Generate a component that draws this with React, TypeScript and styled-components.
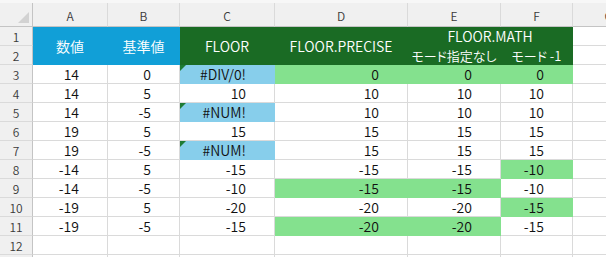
import React from "react";
import styled, { createGlobalStyle } from "styled-components";

const GlobalStyle = createGlobalStyle`
  html, body { margin: 0; padding: 0; background: #ffffff; }
  body { font-family: "Noto Sans CJK JP", "Noto Sans", sans-serif; }
`;

const BLUE = "#119fd7";
const DARK_GREEN = "#1a6b24";
const SKY = "#87ceeb";
const MINT = "#84e18e";
const GRID = "#dadada";
const HEAD_BG = "#f0f0f0";
const HEAD_LINE = "#c4c4c4";

const Sheet = styled.div`
  width: 606px;
  height: 257px;
  overflow: hidden;
  background: #fff;
`;

const TopStrip = styled.div`
  height: 3px;
  background: #f7f7f7;
`;

const Grid = styled.div`
  display: grid;
  grid-template-columns: 33px 75px 72px 95px 133px 93px 72px 72px;
  grid-template-rows: 24px repeat(13, 19px);
`;

const Corner = styled.div`
  background: ${HEAD_BG};
  border-right: 1px solid ${HEAD_LINE};
  border-bottom: 1px solid ${HEAD_LINE};
  box-sizing: border-box;
  display: flex;
  align-items: flex-end;
  justify-content: flex-end;
  padding: 0 3px 3px 0;
`;

const CornerMark = styled.div`
  width: 0;
  height: 0;
  border-left: 11px solid transparent;
  border-bottom: 11px solid #d2d2d2;
`;

const ColHead = styled.div`
  background: ${HEAD_BG};
  border-right: 1px solid ${GRID};
  border-bottom: 1px solid ${HEAD_LINE};
  box-sizing: border-box;
  display: flex;
  align-items: center;
  justify-content: center;
  padding-top: 2px;
  font-size: 12px;
  font-weight: 350;
  color: #3a3a3a;
`;

const RowHead = styled.div`
  background: ${HEAD_BG};
  border-right: 1px solid ${HEAD_LINE};
  border-bottom: 1px solid ${GRID};
  box-sizing: border-box;
  display: flex;
  align-items: center;
  justify-content: center;
  font-size: 12px;
  font-weight: 350;
  color: #3a3a3a;
`;

const TitleCell = styled.div<{ $fill: string; $col: string; $row: string; $small?: boolean }>`
  grid-column: ${(p) => p.$col};
  grid-row: ${(p) => p.$row};
  background: ${(p) => p.$fill};
  border-right: 1px solid ${(p) => p.$fill};
  border-bottom: 1px solid ${(p) => p.$fill};
  box-sizing: border-box;
  display: flex;
  align-items: center;
  justify-content: center;
  color: #ffffff;
  font-size: ${(p) => (p.$small ? "13px" : "14px")};
  font-weight: 350;
  font-feature-settings: "palt";
  white-space: nowrap;
`;

const Cell = styled.div<{ $fill?: string }>`
  position: relative;
  background: ${(p) => p.$fill ?? "#ffffff"};
  border-right: 1px solid ${(p) => p.$fill ?? GRID};
  border-bottom: 1px solid ${(p) => p.$fill ?? GRID};
  box-sizing: border-box;
  display: flex;
  align-items: center;
  justify-content: flex-end;
  padding-right: 28px;
  font-size: 14px;
  font-weight: 350;
  color: #111;
  white-space: nowrap;
`;

const ErrorMark = styled.span`
  position: absolute;
  left: 0;
  top: 0;
  width: 0;
  height: 0;
  border-top: 6px solid #1e7b34;
  border-right: 6px solid transparent;
`;

type CellData = { v: string; fill?: string; err?: boolean };

const rows: CellData[][] = [
  [{ v: "14" }, { v: "0" }, { v: "#DIV/0!", fill: SKY, err: true }, { v: "0", fill: MINT }, { v: "0", fill: MINT }, { v: "0", fill: MINT }],
  [{ v: "14" }, { v: "5" }, { v: "10" }, { v: "10" }, { v: "10" }, { v: "10" }],
  [{ v: "14" }, { v: "-5" }, { v: "#NUM!", fill: SKY, err: true }, { v: "10" }, { v: "10" }, { v: "10" }],
  [{ v: "19" }, { v: "5" }, { v: "15" }, { v: "15" }, { v: "15" }, { v: "15" }],
  [{ v: "19" }, { v: "-5" }, { v: "#NUM!", fill: SKY, err: true }, { v: "15" }, { v: "15" }, { v: "15" }],
  [{ v: "-14" }, { v: "5" }, { v: "-15" }, { v: "-15" }, { v: "-15" }, { v: "-10", fill: MINT }],
  [{ v: "-14" }, { v: "-5" }, { v: "-10" }, { v: "-15", fill: MINT }, { v: "-15", fill: MINT }, { v: "-10" }],
  [{ v: "-19" }, { v: "5" }, { v: "-20" }, { v: "-20" }, { v: "-20" }, { v: "-15", fill: MINT }],
  [{ v: "-19" }, { v: "-5" }, { v: "-15" }, { v: "-20", fill: MINT }, { v: "-20", fill: MINT }, { v: "-15" }],
];

const letters = ["A", "B", "C", "D", "E", "F", "G"];

export default function App() {
  return (
    <Sheet>
      <GlobalStyle />
      <TopStrip />
      <Grid>
        <Corner>
          <CornerMark />
        </Corner>
        {letters.map((l) => (
          <ColHead key={l}>{l}</ColHead>
        ))}

        <RowHead style={{ gridColumn: 1, gridRow: 2 }}>1</RowHead>
        <RowHead style={{ gridColumn: 1, gridRow: 3 }}>2</RowHead>
        <TitleCell $fill={BLUE} $col="2" $row="2 / span 2">数値</TitleCell>
        <TitleCell $fill={BLUE} $col="3" $row="2 / span 2">基準値</TitleCell>
        <TitleCell $fill={DARK_GREEN} $col="4" $row="2 / span 2">FLOOR</TitleCell>
        <TitleCell $fill={DARK_GREEN} $col="5" $row="2 / span 2">FLOOR.PRECISE</TitleCell>
        <TitleCell $fill={DARK_GREEN} $col="6 / span 2" $row="2">FLOOR.MATH</TitleCell>
        <TitleCell $fill={DARK_GREEN} $col="6" $row="3" $small>モード指定なし</TitleCell>
        <TitleCell $fill={DARK_GREEN} $col="7" $row="3" $small>モード -1</TitleCell>
        <Cell style={{ gridColumn: 8, gridRow: 2 }} />
        <Cell style={{ gridColumn: 8, gridRow: 3 }} />

        {rows.map((r, i) => (
          <React.Fragment key={i}>
            <RowHead>{i + 3}</RowHead>
            {r.map((c, j) => (
              <Cell key={j} $fill={c.fill}>
                {c.err && <ErrorMark />}
                {c.v}
              </Cell>
            ))}
            <Cell />
          </React.Fragment>
        ))}

        <RowHead>12</RowHead>
        {letters.map((l) => (
          <Cell key={`r12-${l}`} />
        ))}
        <RowHead />
        {letters.map((l) => (
          <Cell key={`r13-${l}`} />
        ))}
      </Grid>
    </Sheet>
  );
}
